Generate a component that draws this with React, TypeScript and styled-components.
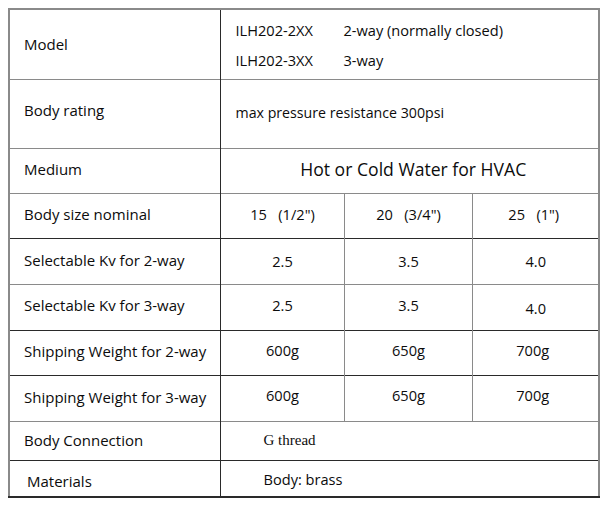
import React from "react";
import styled, { createGlobalStyle, css } from "styled-components";

const Global = createGlobalStyle`
  html, body { margin: 0; padding: 0; background: #fff; }
  body { padding: 8px 0 0 8px; font-family: "Open Sans", "Liberation Sans", sans-serif; color: #0c0c0c; }
`;

const DARK = "#2a2a2a";
const GRAY = "#8a8a8a";

/* vertical/horizontal nudge expressed as asymmetric padding */
const shift = (dy = 0, dx = 0) => css`
  padding-top: ${Math.max(0, dy * 2)}px;
  padding-bottom: ${Math.max(0, -dy * 2)}px;
  padding-right: ${Math.max(0, -dx * 2)}px;
`;

const Table = styled.table`
  border-collapse: collapse;
  table-layout: fixed;
  width: 590px;
  border-top: 2px solid ${GRAY};
  border-left: 2px solid ${GRAY};
  border-right: 2px solid ${GRAY};
  border-bottom: 2px solid ${DARK};
`;

const Row = styled.tr<{ $h: number; $line: string }>`
  height: ${(p) => p.$h}px;
  border-bottom: 1px solid ${(p) => p.$line};
`;

const Label = styled.td<{ $dy?: number; $dx?: number }>`
  ${(p) => shift(p.$dy)}
  padding-left: ${(p) => 14 + (p.$dx ?? 0)}px;
  font-size: 15px;
  vertical-align: middle;
  border-right: 1px solid ${DARK};
  white-space: nowrap;
`;

const Value = styled.td<{ $dy?: number; $size?: number }>`
  ${(p) => shift(p.$dy)}
  padding-left: 15px;
  font-size: ${(p) => p.$size ?? 14.6}px;
  vertical-align: middle;
  white-space: pre;
`;

const Center = styled.td<{ $dy?: number; $dx?: number; $last?: boolean }>`
  ${(p) => shift(p.$dy, p.$dx)}
  text-align: center;
  font-size: 14.6px;
  vertical-align: middle;
  white-space: pre;
  border-right: ${(p) => (p.$last ? "none" : `1px solid ${GRAY}`)};
`;

const Big = styled.td`
  text-align: center;
  font-size: 17.6px;
  vertical-align: middle;
  padding: 0 0 4px 8px;
`;

const Serif = styled.td`
  padding: 0 0 0 43px;
  font-family: "Liberation Serif", "Times New Roman", serif;
  font-size: 15px;
  vertical-align: middle;
`;

const ModelLines = styled.div`
  display: grid;
  grid-template-columns: 108px auto;
  row-gap: 10px;
  font-size: 14.6px;
  line-height: 20px;
  padding-top: 2px;
`;

const Materials = styled.td`
  padding: 2px 0 0 43px;
  font-size: 14.6px;
  vertical-align: middle;
`;

export default function App() {
  return (
    <>
      <Global />
      <Table>
        <colgroup>
          <col style={{ width: 211 }} />
          <col style={{ width: 124 }} />
          <col style={{ width: 128 }} />
          <col style={{ width: 127 }} />
        </colgroup>
        <tbody>
          <Row $h={70} $line={GRAY}>
            <Label>Model</Label>
            <Value colSpan={3}>
              <ModelLines>
                <span>ILH202-2XX</span>
                <span>2-way (normally closed)</span>
                <span>ILH202-3XX</span>
                <span>3-way</span>
              </ModelLines>
            </Value>
          </Row>
          <Row $h={69} $line={GRAY}>
            <Label $dy={-4}>Body rating</Label>
            <Value colSpan={3} $dy={-1} $size={14.2}>max pressure resistance 300psi</Value>
          </Row>
          <Row $h={45} $line={GRAY}>
            <Label $dy={-2}>Medium</Label>
            <Big colSpan={3}>Hot or Cold Water for HVAC</Big>
          </Row>
          <Row $h={45} $line={DARK}>
            <Label $dy={-2}>Body size nominal</Label>
            <Center $dy={-2}>{"15   (1/2\")"}</Center>
            <Center $dy={-2}>{"20   (3/4\")"}</Center>
            <Center $dy={-2} $dx={-2} $last>{"25   (1\")"}</Center>
          </Row>
          <Row $h={46} $line={GRAY}>
            <Label $dy={-1}>Selectable Kv for 2-way</Label>
            <Center>2.5</Center>
            <Center>3.5</Center>
            <Center $last>4.0</Center>
          </Row>
          <Row $h={46} $line={DARK}>
            <Label $dy={-2}>Selectable Kv for 3-way</Label>
            <Center $dy={-2}>2.5</Center>
            <Center $dy={-2}>3.5</Center>
            <Center $dy={1} $last>4.0</Center>
          </Row>
          <Row $h={45} $line={DARK}>
            <Label $dy={-2}>Shipping Weight for 2-way</Label>
            <Center $dy={-3}>600g</Center>
            <Center $dy={-3}>650g</Center>
            <Center $dy={-3} $dx={-3} $last>700g</Center>
          </Row>
          <Row $h={46} $line={GRAY}>
            <Label $dy={-1}>Shipping Weight for 3-way</Label>
            <Center $dy={-3}>600g</Center>
            <Center $dy={-3}>650g</Center>
            <Center $dy={-3} $dx={-3} $last>700g</Center>
          </Row>
          <Row $h={39} $line={DARK}>
            <Label $dy={-1}>Body Connection</Label>
            <Serif colSpan={3}>G thread</Serif>
          </Row>
          <Row $h={37} $line={DARK}>
            <Label $dx={3} $dy={3}>Materials</Label>
            <Materials colSpan={3}>Body: brass</Materials>
          </Row>
        </tbody>
      </Table>
    </>
  );
}
